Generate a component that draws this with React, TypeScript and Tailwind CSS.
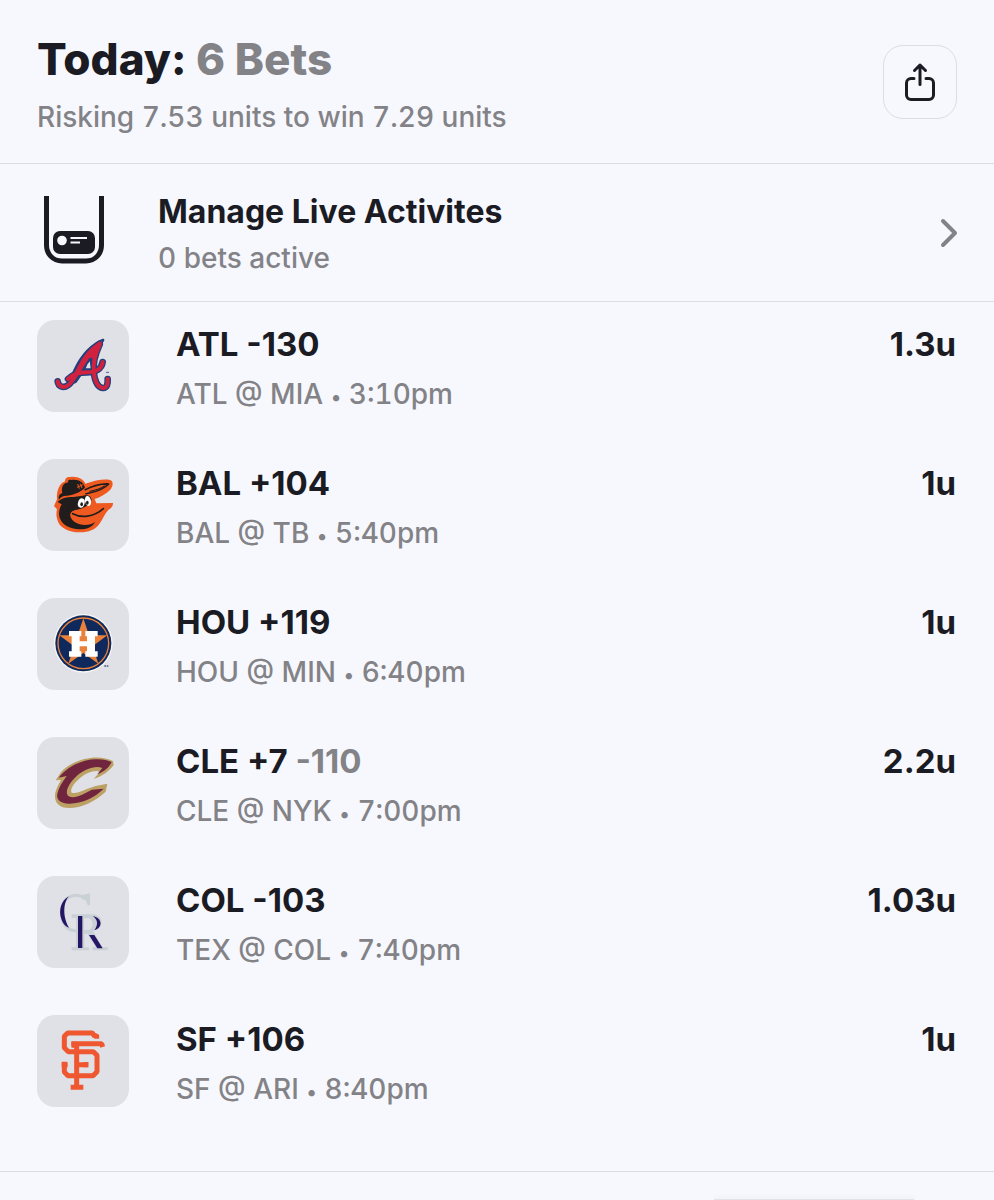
import React from 'react';
import { ChevronRight } from 'lucide-react';

type Bet = {
    team: string;
    line: string;
    odds?: string;
    matchup: string;
    time: string;
    units: string;
    Logo: React.FC;
};

function BravesLogo() {
    const strokes = (
        <>
            <path d="M203 90C193 112 182 142 185 172C188 198 197 219 212 221C225 222 228 209 227 194" />
            <path d="M77 201C79 216 93 223 108 213C123 203 131 181 143 158C157 129 176 106 203 88" />
            <path d="M108 194C122 180 142 174 164 174C190 174 209 164 212 143" />
        </>
    );
    return (
        <>
            <g fill="none" stroke="#23407c" strokeWidth="20" strokeLinecap="round" strokeLinejoin="round">{strokes}</g>
            <path d="M213 77C178 92 150 123 131 161C123 178 115 195 108 207L130 203C147 181 160 155 173 134L190 138C193 118 200 98 213 77Z" fill="#d0213f" stroke="#23407c" strokeWidth="8" strokeLinejoin="round" />
            <g fill="none" stroke="#d0213f" strokeWidth="12" strokeLinecap="round" strokeLinejoin="round">{strokes}</g>
            <path d="M211 80C180 95 155 125 136 161C130 175 121 191 115 202L126 200C142 180 157 152 176 126C186 110 199 94 211 80Z" fill="#d0213f" />
            <path d="M175 136L178 164H158C161 153 167 143 175 136Z" fill="#dfe1e6" stroke="#23407c" strokeWidth="4" strokeLinejoin="round" />
            <path d="M222 174H231" stroke="#4a6291" strokeWidth="3" />
        </>
    );
}

function OriolesLogo() {
    return (
        <>
            <path d="M66 158L75 138C73 121 78 99 91 88L99 84C98 76 105 69 114 71C136 67 155 78 160 91C190 81 216 76 234 80C246 84 243 99 235 109C222 122 205 131 188 137L193 150L243 149C244 158 237 165 229 170C218 181 213 197 202 212C190 229 169 237 145 237C113 238 82 224 76 199C72 187 73 175 75 168Z" fill="#ef5a20" />
            <path d="M91 119C87 101 94 89 109 87C106 81 111 77 118 80C140 77 155 87 159 103C144 118 122 126 96 128C88 131 84 134 81 139C78 129 82 122 91 119Z" fill="#211d1c" />
            <path d="M77 146C87 135 103 131 124 131L153 127C170 123 177 129 179 139C172 154 157 165 135 169C120 172 113 178 115 189C119 204 138 215 159 215C171 215 181 212 190 206C178 226 154 230 132 227C103 224 83 207 81 183C81 171 84 161 89 153Z" fill="#211d1c" />
            <path d="M160 122C180 116 208 115 230 92C211 91 180 99 158 110" fill="#ef5a20" stroke="#211d1c" strokeWidth="5" strokeLinejoin="round" />
            <path d="M172 114C192 110 208 105 218 97" fill="none" stroke="#211d1c" strokeWidth="3" />
            <path d="M118 176C130 170 148 170 165 164C184 157 206 159 224 155C210 171 191 182 169 186C147 190 130 186 118 176Z" fill="#ef5a20" />
            <path d="M122 181C147 194 184 193 214 166" fill="none" stroke="#211d1c" strokeWidth="5" strokeLinecap="round" />
            <path d="M137 92L142 106M145 91L150 104M135 102L153 94" stroke="#ef5a20" strokeWidth="3" fill="none" />
            <ellipse cx="148" cy="149" rx="10" ry="14" fill="#fff" transform="rotate(18 148 149)" />
            <ellipse cx="168" cy="143" rx="9" ry="15" fill="#fff" transform="rotate(-12 168 143)" />
            <ellipse cx="149" cy="153" rx="4" ry="6" fill="#211d1c" />
            <ellipse cx="166" cy="148" rx="4" ry="6" fill="#211d1c" />
        </>
    );
}

function AstrosLogo() {
    return (
        <>
            <circle cx="154" cy="153" r="88" fill="#f8f7f7" />
            <circle cx="154" cy="153" r="84" fill="#10295c" />
            <circle cx="154" cy="153" r="76" fill="none" stroke="#e8813b" strokeWidth="4" />
            <path d="M154 78L171 129H226L182 162L199 214L154 182L109 214L126 162L82 129H137Z" fill="#e8813b" />
            <path d="M111 116H148V132H143V147H165V132H160V116H197V132H189V177H197V193H160V177H165V162H143V177H148V193H111V177H119V132H111Z" fill="#fff" />
            <path d="M217 221H230" stroke="#4b5b7d" strokeWidth="4" strokeDasharray="5 2" />
        </>
    );
}

function CavaliersLogo() {
    return (
        <>
            <path d="M71 147L88 121C105 103 130 90 157 83C187 75 219 77 243 89L245 101C232 119 212 134 185 143L204 121C188 116 166 122 145 139C126 155 113 173 119 184C136 190 164 171 191 164L226 157L221 181C189 211 148 230 111 230C84 230 69 217 69 195C69 179 77 164 87 146Z" fill="#bca064" />
            <path d="M80 139C106 105 148 87 186 84C207 82 226 85 239 92C231 109 216 121 196 129L211 110C190 101 158 113 135 133C113 152 96 182 109 194C127 205 155 188 180 175L215 172C190 198 150 216 113 217C87 218 72 206 76 188C80 168 91 152 104 134Z" fill="#70243e" />
        </>
    );
}

function RockiesLogo() {
    return (
        <>
            <path d="M160 86C133 64 99 78 91 107C82 145 98 182 132 181L151 180" fill="none" stroke="#c9d0d6" strokeWidth="9" />
            <path d="M151 74L174 69V105H167C163 89 155 80 142 77Z" fill="#c9d0d6" />
            <path d="M119 132H176C198 132 211 142 208 158C206 170 195 178 183 181L211 231H227V240H182V231H191L166 190H157V231H171V240H119V231H132V143H119Z" fill="#c9d0d6" />
            <path d="M156 144H169C184 144 187 177 168 179H156Z" fill="#dfe1e6" />
            <path d="M110 78C87 91 79 121 88 146C94 163 103 170 111 172C98 151 94 123 99 101C102 90 106 84 110 78Z" fill="#251565" />
            <path d="M138 137H151V233H138ZM183 138C211 142 214 173 187 180C198 165 199 150 183 138ZM171 194H187L212 234H196Z" fill="#251565" />
        </>
    );
}

function GiantsLogo() {
    return (
        <g fill="none" stroke="#ef5730" strokeWidth="15" strokeLinejoin="bevel">
            <path d="M194 88V76L188 81L181 71H107L97 81V115L109 127H184L195 138V187L183 199H108L97 188V157" />
            <path d="M118 103H209L212 113" />
            <path d="M134 100V233M134 166H167" />
            <path d="M116 234H154M89 166H107M162 158V174M126 97V115" />
        </g>
    );
}

const bets: Bet[] = [
    { team: 'ATL', line: '-130', matchup: 'ATL @ MIA', time: '3:10pm', units: '1.3u', Logo: BravesLogo },
    { team: 'BAL', line: '+104', matchup: 'BAL @ TB', time: '5:40pm', units: '1u', Logo: OriolesLogo },
    { team: 'HOU', line: '+119', matchup: 'HOU @ MIN', time: '6:40pm', units: '1u', Logo: AstrosLogo },
    { team: 'CLE', line: '+7', odds: '-110', matchup: 'CLE @ NYK', time: '7:00pm', units: '2.2u', Logo: CavaliersLogo },
    { team: 'COL', line: '-103', matchup: 'TEX @ COL', time: '7:40pm', units: '1.03u', Logo: RockiesLogo },
    { team: 'SF', line: '+106', matchup: 'SF @ ARI', time: '8:40pm', units: '1u', Logo: GiantsLogo },
];

function ShareIcon() {
    return (
        <svg viewBox="0 0 32 40" className="h-10 w-8" fill="none" stroke="#1b1b24" strokeWidth="3" strokeLinecap="round" strokeLinejoin="round" aria-hidden="true">
            <path d="M16 22.5V3M10.5 8.5L16 3L21.5 8.5" />
            <path d="M10 16.5H7C4.5 16.5 2.5 18.5 2.5 21V33C2.5 35.5 4.5 37.5 7 37.5H25C27.5 37.5 29.5 35.5 29.5 33V21C29.5 18.5 27.5 16.5 25 16.5H22" />
        </svg>
    );
}

function LiveActivityIcon() {
    return (
        <svg viewBox="0 0 62 68" className="mt-[7px] h-[68px] w-[62px] self-start" aria-hidden="true">
            <path d="M3.5 0V49C3.5 58 10 65 19 65H43C52 65 58.5 58 58.5 49V0" fill="none" stroke="#1b1b24" strokeWidth="5" />
            <rect x="10" y="35" width="42" height="23" rx="7" fill="#1b1b24" />
            <circle cx="19" cy="44.5" r="4.8" fill="#f7f8fe" />
            <path d="M27.5 42H44M27.5 46.5H37" stroke="#f7f8fe" strokeWidth="2.2" />
        </svg>
    );
}

function BetRow({ bet }: { bet: Bet }) {
    return (
        <li className="flex items-start">
            <div className="size-[92px] shrink-0 rounded-[18px] bg-[#dfe1e6]">
                <svg viewBox="15 17 276 276" className="size-full" aria-hidden="true">
                    <bet.Logo />
                </svg>
            </div>
            <div className="ml-[47px] flex-1 pt-1">
                <h3 className="text-[33px] leading-10 font-bold">
                    {bet.team} {bet.line}
                    {bet.odds && <span className="text-[#838387]"> {bet.odds}</span>}
                </h3>
                <p className="mt-3 text-[28px] leading-9 font-medium text-[#838387] tabular-nums">
                    {bet.matchup} <span className="text-xl">•</span> {bet.time}
                </p>
            </div>
            <span className="pt-1 text-[33px] leading-10 font-bold">{bet.units}</span>
        </li>
    );
}

export default function App() {
    return (
        <main className="flex min-h-screen flex-col overflow-hidden bg-[#f7f8fe] font-['Inter',sans-serif] text-[#1b1b24]">
            <header className="flex items-start justify-between border-b border-[#dcdde2] px-[37px] pt-[35px] pb-7">
                <div>
                    <h1 className="text-[44px] leading-[48px] font-extrabold">
                        Today: <span className="text-[#838387]">6 Bets</span>
                    </h1>
                    <p className="mt-4 text-[28px] leading-9 font-medium text-[#838387] tabular-nums">Risking 7.53 units to win 7.29 units</p>
                </div>
                <button type="button" aria-label="Share" className="mt-2.5 flex size-[74px] items-center justify-center rounded-[20px] border border-[#dcdde2]">
                    <ShareIcon />
                </button>
            </header>

            <a href="#live-activities" className="flex items-center border-b border-[#dcdde2] py-[25px] pr-[37px] pl-[43px]">
                <LiveActivityIcon />
                <div className="ml-[53px] flex-1 pt-[3px]">
                    <h2 className="text-[32px] leading-10 font-bold">Manage Live Activites</h2>
                    <p className="mt-2 text-[28px] leading-9 font-medium text-[#838387] tabular-nums">0 bets active</p>
                </div>
                <ChevronRight className="-mr-4 size-12 text-[#838387]" strokeWidth={2} />
            </a>

            <ul className="flex flex-col gap-[47px] border-b border-[#dcdde2] pt-[18px] pr-[38px] pb-16 pl-[37px]">
                {bets.map((bet) => (
                    <BetRow key={bet.team} bet={bet} />
                ))}
            </ul>

            <div className="flex flex-1 items-end justify-end pr-20">
                <div className="h-px w-50 bg-[#e2e2e7] shadow-[0_0_6px_#d6d6dc]" />
            </div>
        </main>
    );
}
